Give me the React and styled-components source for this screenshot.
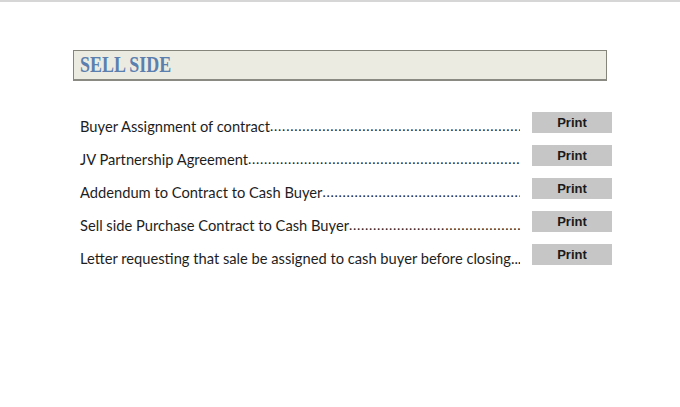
import React from 'react'
import styled, { createGlobalStyle } from 'styled-components'

const GlobalStyle = createGlobalStyle`
    html, body {
        margin: 0;
        padding: 0;
        background: #ffffff;
    }
`

const Page = styled.div`
    width: 680px;
    height: 407px;
    border-top: 2px solid #d6d6d6;
    box-sizing: border-box;
    padding: 48px 0 0 73px;
`

const Section = styled.div`
    width: 539px;
`

const Header = styled.div`
    width: 534px;
    height: 31px;
    box-sizing: border-box;
    background: #ecebe2;
    border: 1px solid #85857c;
    border-bottom: 2px solid #8a8a82;
    display: flex;
    align-items: center;
    padding-left: 6px;
`

const Title = styled.h2`
    margin: 0;
    font-family: "Liberation Serif", "Times New Roman", serif;
    font-weight: bold;
    font-size: 23px;
    line-height: 26px;
    transform: scaleX(0.78);
    transform-origin: left center;
    color: #5b7fae;
`

const List = styled.div`
    margin-top: 22px;
    padding-left: 7px;
    display: flex;
    flex-direction: column;
`

const Row = styled.div`
    height: 33px;
    display: grid;
    grid-template-columns: 1fr 80px;
    column-gap: 12px;
    align-items: end;
`

const Label = styled.div`
    display: flex;
    overflow: hidden;
    white-space: nowrap;
    font-family: Lato, "Open Sans", sans-serif;
    font-size: 14.7px;
    line-height: 20px;
    color: #1e1e1e;
`

const Name = styled.span`
    flex-shrink: 0;
`

const Leader = styled.span`
    flex: 1;
    overflow: hidden;
    min-width: 0;
    font-size: 14px;
    letter-spacing: 0.7px;
    &::after {
        content: '${'.'.repeat(200)}';
    }
`

const PrintButton = styled.button`
    height: 21px;
    margin-bottom: 3px;
    border: none;
    background: #c6c6c6;
    font-family: "Liberation Sans", Arial, sans-serif;
    font-weight: bold;
    font-size: 13px;
    color: #1a1a1a;
    padding: 0;
    cursor: pointer;
`

const docs = [
    'Buyer Assignment of contract',
    'JV Partnership Agreement',
    'Addendum to Contract to Cash Buyer',
    'Sell side Purchase Contract to Cash Buyer',
    'Letter requesting that sale be assigned to cash buyer before closing...',
]

const App = () => {
    return (
        <Page>
            <GlobalStyle />
            <Section>
                <Header>
                    <Title>SELL SIDE</Title>
                </Header>
                <List>
                    {docs.map((d) => (
                        <Row key={d}>
                            <Label>
                                <Name>{d}</Name>
                                <Leader />
                            </Label>
                            <PrintButton>Print</PrintButton>
                        </Row>
                    ))}
                </List>
            </Section>
        </Page>
    )
}

export default App
